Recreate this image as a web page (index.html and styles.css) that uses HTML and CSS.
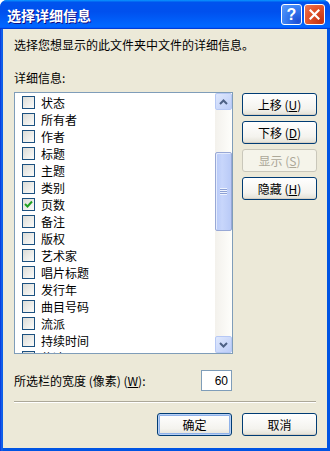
FILE: index.html
```html
<!DOCTYPE html>
<html lang="zh-CN">
<head>
    <meta charset="UTF-8">
    <title>选择详细信息</title>
    <link rel="stylesheet" href="styles.css">
</head>
<body>

    <div class="window">
        <div class="titlebar">
            <span class="title">选择详细信息</span>
            <div class="title-buttons">
                <span class="tbtn help">?</span>
                <span class="tbtn close">
                    <svg width="11" height="11" viewBox="0 0 11 11">
                        <path d="M1.5 1.5 L9.5 9.5 M9.5 1.5 L1.5 9.5" stroke="#fff" stroke-width="2.2" stroke-linecap="square"/>
                    </svg>
                </span>
            </div>
        </div>

        <div class="frame">
            <div class="client">
                <p class="desc">选择您想显示的此文件夹中文件的详细信息。</p>
                <p class="label">详细信息:</p>

                <div class="main">
                    <div class="listbox">
                        <ul class="items">
                            <li><span class="check"></span>状态</li>
                            <li><span class="check"></span>所有者</li>
                            <li><span class="check"></span>作者</li>
                            <li><span class="check"></span>标题</li>
                            <li><span class="check"></span>主题</li>
                            <li><span class="check"></span>类别</li>
                            <li><span class="check checked">
                                <svg width="9" height="9" viewBox="0 0 9 9"><path d="M1 4 L3.5 6.5 L8 1.5" fill="none" stroke="#21a121" stroke-width="2"/></svg>
                            </span>页数</li>
                            <li><span class="check"></span>备注</li>
                            <li><span class="check"></span>版权</li>
                            <li><span class="check"></span>艺术家</li>
                            <li><span class="check"></span>唱片标题</li>
                            <li><span class="check"></span>发行年</li>
                            <li><span class="check"></span>曲目号码</li>
                            <li><span class="check"></span>流派</li>
                            <li><span class="check"></span>持续时间</li>
                            <li><span class="check"></span>位速</li>
                        </ul>
                        <div class="scrollbar">
                            <span class="sbtn">
                                <svg width="9" height="6" viewBox="0 0 9 6"><path d="M1 5 L4.5 1.5 L8 5" fill="none" stroke="#4d6185" stroke-width="2"/></svg>
                            </span>
                            <div class="track">
                                <div class="thumb">
                                    <span class="grip"></span>
                                </div>
                            </div>
                            <span class="sbtn">
                                <svg width="9" height="6" viewBox="0 0 9 6"><path d="M1 1 L4.5 4.5 L8 1" fill="none" stroke="#4d6185" stroke-width="2"/></svg>
                            </span>
                        </div>
                    </div>

                    <div class="side-buttons">
                        <button>上移 (<u>U</u>)</button>
                        <button>下移 (<u>D</u>)</button>
                        <button class="disabled">显示 (<u>S</u>)</button>
                        <button>隐藏 (<u>H</u>)</button>
                    </div>
                </div>

                <div class="width-row">
                    <span>所选栏的宽度 (像素) (<u>W</u>):</span>
                    <input type="text" class="width-input" value="60">
                </div>

                <div class="sep"></div>

                <div class="footer">
                    <button class="default">确定</button>
                    <button>取消</button>
                </div>
            </div>
        </div>
    </div>

</body>
</html>
```

FILE: styles.css
```css
body {
    margin: 0;
    font-family: "Noto Sans CJK SC", "Liberation Sans", sans-serif;
    font-size: 12px;
    color: #000;
    background: #fff;
}

.window {
    width: 330px;
    height: 451px;
    display: flex;
    flex-direction: column;
    background-color: #0054e3;
    border-radius: 7px 7px 0 0;
    overflow: hidden;
}

.titlebar {
    height: 29px;
    display: flex;
    align-items: center;
    justify-content: space-between;
    padding: 0 5px 0 7px;
    background: linear-gradient(180deg, #0997ff, #0053ee 8%, #0050ee 40%, #0066ff 88%, #0066ff 93%, #005bff 95%, #003dd7 96%, #003dd7);
}

.title {
    color: #fff;
    font-size: 14px;
    font-weight: bold;
    text-shadow: 1px 1px #0f1089;
}

.title-buttons {
    display: flex;
    gap: 2px;
}

.tbtn {
    width: 21px;
    height: 21px;
    box-sizing: border-box;
    border: 1px solid #fff;
    border-radius: 3px;
    display: flex;
    align-items: center;
    justify-content: center;
}

.help {
    background: radial-gradient(circle at 85% 85%, #1c4ed6, #3a80f3 60%, #5e9bfa);
    color: #fff;
    font-family: "Liberation Sans", sans-serif;
    font-size: 16px;
    font-weight: bold;
}

.close {
    background: radial-gradient(circle at 85% 85%, #c43313, #e2552c 60%, #ec7a5a);
}

.frame {
    flex: 1;
    display: flex;
    padding: 0 3px 3px 3px;
    background: linear-gradient(90deg, #0831d9, #166aee 2px, #0054e3 3px);
}

.client {
    flex: 1;
    display: flex;
    flex-direction: column;
    padding: 9px 10px 0 11px;
    background-color: #ece9d8;
}

.desc,
.label {
    margin: 0;
    line-height: 14px;
}

.label {
    margin-top: 19px;
}

.main {
    display: flex;
    margin-top: 7px;
}

.listbox {
    width: 219px;
    height: 262px;
    box-sizing: border-box;
    border: 1px solid #7f9db9;
    background: #fff;
    display: flex;
    overflow: hidden;
}

.items {
    flex: 1;
    list-style: none;
    margin: 0;
    padding: 1px 0 0 7px;
    overflow: hidden;
}

.items li {
    height: 17px;
    display: flex;
    align-items: center;
    gap: 6px;
    white-space: nowrap;
}

.check {
    width: 13px;
    height: 13px;
    box-sizing: border-box;
    border: 1px solid #1c5180;
    background: linear-gradient(135deg, #dcdcd7, #fbfbf9);
    display: flex;
    align-items: center;
    justify-content: center;
    flex-shrink: 0;
}

.scrollbar {
    width: 17px;
    display: flex;
    flex-direction: column;
    background: linear-gradient(90deg, #f3f1ec, #fefefb);
}

.sbtn {
    width: 17px;
    height: 17px;
    box-sizing: border-box;
    border: 1px solid #b6c8f5;
    border-radius: 2px;
    background: linear-gradient(135deg, #dfe8fd, #bccdf8);
    display: flex;
    align-items: center;
    justify-content: center;
}

.track {
    flex: 1;
}

.thumb {
    margin-top: 42px;
    height: 79px;
    box-sizing: border-box;
    border: 1px solid #98a8d6;
    border-radius: 2px;
    background: linear-gradient(90deg, #b7c9f8, #c8d6fb 40%, #b9caf7);
    box-shadow: inset 1px 1px #e4ebfd;
    display: flex;
    align-items: center;
    justify-content: center;
}

.grip {
    width: 7px;
    height: 7px;
    background: repeating-linear-gradient(180deg, #eef3fe 0, #eef3fe 1px, #8ca0d4 1px, #8ca0d4 2px);
}

.side-buttons {
    display: flex;
    flex-direction: column;
    gap: 5px;
    margin-left: 9px;
    padding-top: 1px;
}

button {
    width: 75px;
    height: 23px;
    padding: 0;
    font-family: "Noto Sans CJK SC", "Liberation Sans", sans-serif;
    font-size: 12px;
    color: #000;
    border: 1px solid #003c74;
    border-radius: 3px;
    background: linear-gradient(180deg, #fff, #f4f3ee 70%, #e3e1d6);
    box-shadow: inset 0 -1px #d6d0c5;
}

button.disabled {
    color: #aca899;
    border-color: #c9c7ba;
    background: #f5f4ea;
    box-shadow: none;
}

button.default {
    box-shadow: inset 0 0 0 1px #b8d0f4, inset 0 0 0 2px #8fb2ea;
}

.width-row {
    display: flex;
    align-items: center;
    justify-content: space-between;
    width: 218px;
    margin-top: 16px;
}

.width-input {
    width: 31px;
    height: 21px;
    box-sizing: border-box;
    border: 1px solid #7f9db9;
    padding: 0 3px 0 0;
    font-family: "Liberation Sans", sans-serif;
    font-size: 12px;
    text-align: right;
    outline: none;
}

.sep {
    margin: 10px 0 0 0;
    width: 302px;
    height: 1px;
    border-bottom: 1px solid #fff;
    background-color: #aca899;
}

.footer {
    display: flex;
    justify-content: flex-end;
    gap: 10px;
    margin-top: 10px;
}
```
